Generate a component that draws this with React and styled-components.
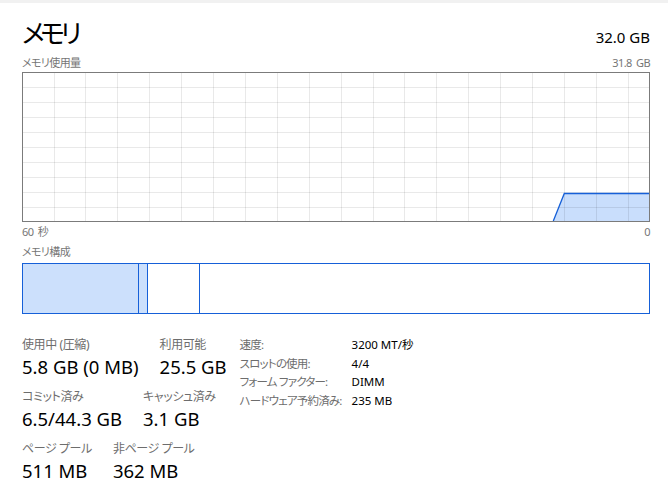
import React from "react";
import styled, { createGlobalStyle } from "styled-components";

const Global = createGlobalStyle`
  html, body { margin: 0; padding: 0; background: #fff; }
  body {
    font-family: "Noto Sans", "Noto Sans CJK JP", sans-serif;
    color: #000;
    -webkit-font-smoothing: antialiased;
  }
`;

const Page = styled.div`
  width: 668px;
  height: 489px;
  box-sizing: border-box;
  border-top: 3px solid #f1f1f1;
  padding: 0 18px 0 22px;
  overflow: hidden;
`;

const Header = styled.div`
  display: flex;
  justify-content: space-between;
  align-items: baseline;
  margin-top: 15px;
`;

const Title = styled.h1`
  margin: 0;
  font-size: 26px;
  font-weight: 400;
  line-height: 30px;
  letter-spacing: -4.5px;
  font-feature-settings: "palt";
`;

const Total = styled.div`
  font-size: 15px;
  line-height: 20px;
`;

const AxisRow = styled.div`
  display: flex;
  justify-content: space-between;
  font-size: 11px;
  line-height: 14px;
  color: #767676;
  letter-spacing: -0.6px;
  word-spacing: 2px;
  font-feature-settings: "palt";
  margin-top: ${(p) => p.$mt || 0}px;
`;

const Chart = styled.div`
  margin-top: 2px;
  height: 148px;
  border: 1px solid #7b7b7b;
  background: #fff;
  svg { display: block; width: 100%; height: 100%; }
`;

const Composition = styled.div`
  margin-top: 4px;
  display: flex;
  height: 49px;
  border: 1px solid #1660d8;
`;

const Segment = styled.div`
  flex: ${(p) => (p.$w ? `0 0 ${p.$w}px` : "1 1 auto")};
  box-sizing: border-box;
  background: ${(p) => (p.$fill ? "#cce0fc" : "#fff")};
  border-right: ${(p) => (p.$last ? "none" : "1px solid #1660d8")};
`;

const Bottom = styled.div`
  display: flex;
  gap: 13px;
  margin-top: 23px;
`;

const Stats = styled.div`
  display: flex;
  flex-direction: column;
  gap: 11px;
`;

const StatRow = styled.div`
  display: flex;
  gap: 21px;
`;

const Stat = styled.div`
  display: flex;
  flex-direction: column;
  gap: 3px;
`;

const StatLabel = styled.div`
  font-size: 12px;
  line-height: 16px;
  color: #6d6d6d;
  letter-spacing: -0.4px;
  font-feature-settings: "palt";
  white-space: nowrap;
`;

const StatValue = styled.div`
  font-size: 18.5px;
  line-height: 22px;
  white-space: nowrap;
`;

const Info = styled.div`
  display: grid;
  grid-template-columns: 112px auto;
  grid-auto-rows: 18.5px;
  align-content: start;
  font-size: 11.5px;
  line-height: 16px;
  font-feature-settings: "palt";
`;

const InfoKey = styled.div`
  color: #6d6d6d;
  letter-spacing: -0.8px;
  white-space: nowrap;
`;

const InfoVal = styled.div`
  color: #000;
  white-space: nowrap;
`;

function UsageChart() {
  const W = 626;
  const H = 148;
  const vLines = [];
  for (let k = 0; k <= 18; k++) {
    const x = 31 + Math.floor(31.9 * k) + 0.5;
    vLines.push(<line key={"v" + k} x1={x} y1={0} x2={x} y2={H} />);
  }
  const hLines = [];
  for (let k = 0; k <= 8; k++) {
    const y = 14 + 15 * k + 0.5;
    hLines.push(<line key={"h" + k} x1={0} y1={y} x2={W} y2={y} />);
  }
  return (
    <svg viewBox={`0 0 ${W} ${H}`} preserveAspectRatio="none">
      <path d={`M530.3 ${H} L541.3 120.5 L${W} 120.5 L${W} ${H} Z`} fill="#c9defc" />
      <g stroke="rgba(0,0,0,0.085)" strokeWidth="1" shapeRendering="crispEdges">
        {vLines}
        {hLines}
      </g>
      <path d={`M530.3 ${H} L541.3 120.5 L${W} 120.5`} fill="none" stroke="#1660d8" strokeWidth="1.3" />
    </svg>
  );
}

const stats = [
  [
    { label: "使用中 (圧縮)", value: "5.8 GB (0 MB)" },
    { label: "利用可能", value: "25.5 GB" },
  ],
  [
    { label: "コミット済み", value: "6.5/44.3 GB" },
    { label: "キャッシュ済み", value: "3.1 GB" },
  ],
  [
    { label: "ページ プール", value: "511 MB" },
    { label: "非ページ プール", value: "362 MB" },
  ],
];

const info = [
  ["速度:", "3200 MT/秒"],
  ["スロットの使用:", "4/4"],
  ["フォーム ファクター:", "DIMM"],
  ["ハードウェア予約済み:", "235 MB"],
];

export default function App() {
  return (
    <>
      <Global />
      <Page>
        <Header>
          <Title>メモリ</Title>
          <Total>32.0 GB</Total>
        </Header>
        <AxisRow $mt={8}>
          <span>メモリ使用量</span>
          <span>31.8 GB</span>
        </AxisRow>
        <Chart>
          <UsageChart />
        </Chart>
        <AxisRow $mt={3}>
          <span>60 秒</span>
          <span>0</span>
        </AxisRow>
        <AxisRow $mt={6}>
          <span>メモリ構成</span>
        </AxisRow>
        <Composition>
          <Segment $fill $w={116} />
          <Segment $fill $w={9} />
          <Segment $w={52} />
          <Segment $last />
        </Composition>
        <Bottom>
          <Stats>
            {stats.map((row, i) => (
              <StatRow key={i}>
                {row.map((s) => (
                  <Stat key={s.label}>
                    <StatLabel>{s.label}</StatLabel>
                    <StatValue>{s.value}</StatValue>
                  </Stat>
                ))}
              </StatRow>
            ))}
          </Stats>
          <Info>
            {info.map(([k, v]) => (
              <React.Fragment key={k}>
                <InfoKey>{k}</InfoKey>
                <InfoVal>{v}</InfoVal>
              </React.Fragment>
            ))}
          </Info>
        </Bottom>
      </Page>
    </>
  );
}
